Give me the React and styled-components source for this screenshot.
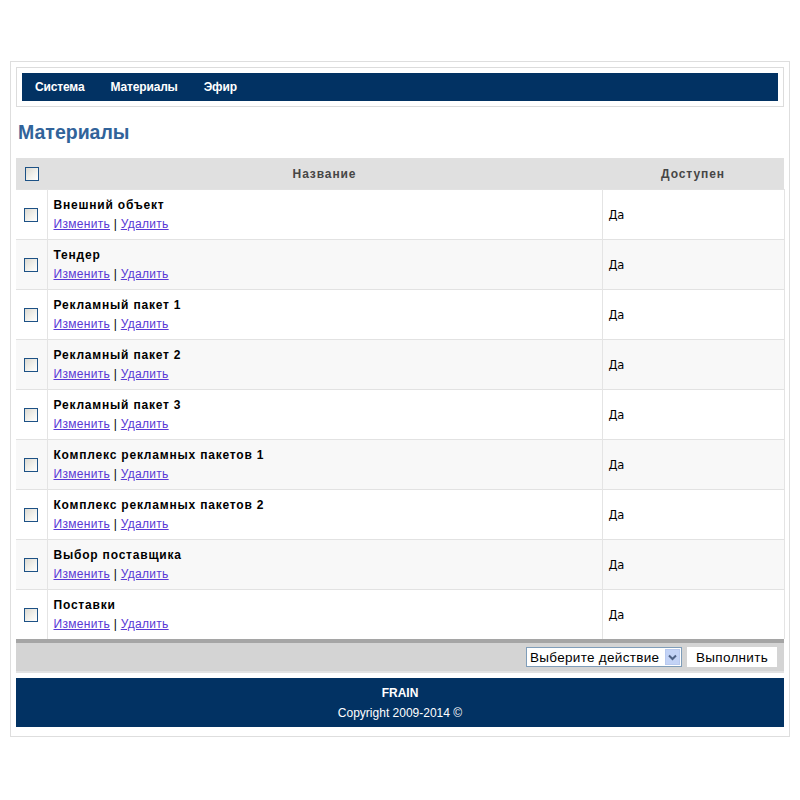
import React from "react";
import styled, { createGlobalStyle } from "styled-components";

const GlobalStyle = createGlobalStyle`
  html, body { margin: 0; padding: 0; background: #ffffff; }
  body { font-family: "Liberation Sans", Arial, sans-serif; font-size: 12px; color: #000; }
`;

const Page = styled.div`
  padding: 61px 10px 40px;
`;

const Frame = styled.div`
  width: 768px;
  border: 1px solid #dedede;
  padding: 5px 5px 9px;
`;

const NavBox = styled.div`
  border: 1px solid #dcdcdc;
  padding: 5px;
`;

const NavBar = styled.nav`
  display: flex;
  background: #023263;
  height: 28px;
  align-items: center;
`;

const NavItem = styled.a`
  padding: 0 13px;
  color: #ffffff;
  font-weight: bold;
  font-size: 12px;
  letter-spacing: -0.15px;
  line-height: 28px;
  text-decoration: none;
`;

const Heading = styled.h1`
  margin: 13px 0 14px 2px;
  font-size: 19.5px;
  line-height: 24px;
  font-weight: bold;
  color: #31639a;
`;

const Table = styled.table`
  width: 768px;
  border-collapse: collapse;
  table-layout: fixed;
`;

const HeadCell = styled.th`
  background: #e0e0e0;
  height: 31px;
  padding: 0;
  font-size: 12px;
  font-weight: bold;
  letter-spacing: 0.9px;
  color: #464646;
  text-align: center;
  vertical-align: middle;
`;

const Row = styled.tr`
  background: ${(p) => (p.$alt ? "#f8f8f8" : "#ffffff")};
  border-top: 1px solid #e2e2e2;
`;

const CheckCell = styled.td`
  width: 31px;
  height: 49px;
  padding: 0;
  text-align: center;
  vertical-align: middle;
  border-right: 1px solid #e4e4e4;
`;

const NameCell = styled.td`
  padding: 1px 6px 0;
  vertical-align: middle;
  border-right: 1px solid #e4e4e4;
`;

const ValueCell = styled.td`
  padding: 1px 6px 0;
  vertical-align: middle;
  font-family: "DejaVu Sans", Tahoma, sans-serif;
  font-size: 11.5px;
  letter-spacing: -0.3px;
  border-right: 1px solid #e4e4e4;
`;

const Name = styled.div`
  font-weight: bold;
  letter-spacing: 0.8px;
  line-height: 19px;
  color: #000;
`;

const Links = styled.div`
  line-height: 19px;
  color: #000;
  letter-spacing: 0.3px;
`;

const Link = styled.a`
  color: #5838d6;
  text-decoration: underline;
  cursor: pointer;
`;

const Check = styled.span`
  display: inline-block;
  width: 12px;
  height: 12px;
  border: 1px solid #1d5286;
  background: linear-gradient(135deg, #dcdad2 0%, #f4f3ee 60%, #ffffff 100%);
  vertical-align: middle;
`;

const ActionBar = styled.div`
  border-top: 4px solid #a5a5a5;
  background: #d4d4d4;
  border-bottom: 2px solid #e2e2e2;
  height: 28px;
  display: flex;
  align-items: center;
  justify-content: flex-end;
  gap: 5px;
  padding: 0 7px;
`;

const SelectBox = styled.div`
  display: flex;
  align-items: center;
  justify-content: space-between;
  width: 150px;
  height: 18px;
  border: 1px solid #7f9db9;
  background: #ffffff;
  padding: 0 1px 0 3px;
  font-size: 13.5px;
  letter-spacing: 0.3px;
  color: #000;
`;

const SelectArrow = styled.span`
  display: flex;
  align-items: center;
  justify-content: center;
  width: 15px;
  height: 16px;
  background: #c3d3f6;
  border: 1px solid #b8c9ef;
  box-sizing: border-box;
`;

const Button = styled.button`
  width: 90px;
  height: 20px;
  border: none;
  background: #ffffff;
  font-family: "Liberation Sans", Arial, sans-serif;
  font-size: 13.5px;
  letter-spacing: 0.3px;
  padding: 0;
  color: #000;
`;

const Footer = styled.footer`
  margin-top: 5px;
  background: #023263;
  height: 49px;
  display: flex;
  flex-direction: column;
  align-items: center;
  justify-content: center;
  color: #ffffff;
  font-size: 12px;
  line-height: 20px;
`;

const FooterTitle = styled.div`
  font-weight: bold;
`;

const items = [
  "Внешний объект",
  "Тендер",
  "Рекламный пакет 1",
  "Рекламный пакет 2",
  "Рекламный пакет 3",
  "Комплекс рекламных пакетов 1",
  "Комплекс рекламных пакетов 2",
  "Выбор поставщика",
  "Поставки",
];

export default function App() {
  return (
    <>
      <GlobalStyle />
      <Page>
        <Frame>
          <NavBox>
            <NavBar>
              <NavItem>Система</NavItem>
              <NavItem>Материалы</NavItem>
              <NavItem>Эфир</NavItem>
            </NavBar>
          </NavBox>
          <Heading>Материалы</Heading>
          <Table>
            <colgroup>
              <col style={{ width: 31 }} />
              <col style={{ width: 555 }} />
              <col style={{ width: 182 }} />
            </colgroup>
            <thead>
              <tr>
                <HeadCell>
                  <Check />
                </HeadCell>
                <HeadCell>Название</HeadCell>
                <HeadCell>Доступен</HeadCell>
              </tr>
            </thead>
            <tbody>
              {items.map((name, i) => (
                <Row key={name} $alt={i % 2 === 1}>
                  <CheckCell>
                    <Check />
                  </CheckCell>
                  <NameCell>
                    <Name>{name}</Name>
                    <Links>
                      <Link>Изменить</Link> | <Link>Удалить</Link>
                    </Links>
                  </NameCell>
                  <ValueCell>Да</ValueCell>
                </Row>
              ))}
            </tbody>
          </Table>
          <ActionBar>
            <SelectBox>
              <span>Выберите действие</span>
              <SelectArrow>
                <svg width="9" height="7" viewBox="0 0 9 7">
                  <path d="M1 1.5 L4.5 5 L8 1.5" fill="none" stroke="#4d6185" strokeWidth="2" />
                </svg>
              </SelectArrow>
            </SelectBox>
            <Button>Выполнить</Button>
          </ActionBar>
          <Footer>
            <FooterTitle>FRAIN</FooterTitle>
            <div>Copyright 2009-2014 ©</div>
          </Footer>
        </Frame>
      </Page>
    </>
  );
}
